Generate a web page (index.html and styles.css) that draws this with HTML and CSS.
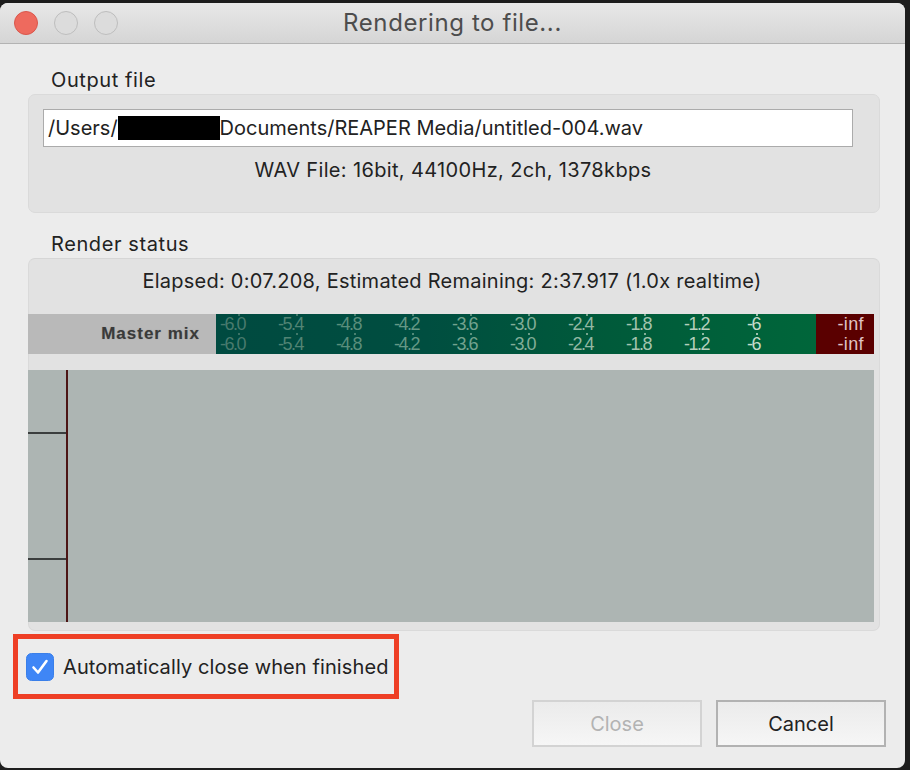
FILE: index.html
```html
<!DOCTYPE html>
<html>
<head>
<meta charset="utf-8">
<link rel="stylesheet" href="styles.css">
</head>
<body>
<div class="window">
  <div class="titlebar">
    <div class="lights">
      <span class="light red"></span>
      <span class="light"></span>
      <span class="light"></span>
    </div>
    <div class="title">Rendering to file...</div>
  </div>
  <div class="content">
    <div class="label">Output file</div>
    <div class="group group-output">
      <div class="input">/Users/<span class="redact"></span>Documents/REAPER Media/untitled-004.wav</div>
      <div class="info">WAV File: 16bit, 44100Hz, 2ch, 1378kbps</div>
    </div>
    <div class="label label-status">Render status</div>
    <div class="group group-status">
      <div class="info info-elapsed">Elapsed: 0:07.208, Estimated Remaining: 2:37.917 (1.0x realtime)</div>
      <div class="meter">
        <div class="meter-name">Master mix</div>
        <div class="meter-scale">
          <div class="tick c1"><span>-6.0</span><span>-6.0</span></div>
          <div class="tick c2"><span>-5.4</span><span>-5.4</span></div>
          <div class="tick c3"><span>-4.8</span><span>-4.8</span></div>
          <div class="tick c4"><span>-4.2</span><span>-4.2</span></div>
          <div class="tick c5"><span>-3.6</span><span>-3.6</span></div>
          <div class="tick c6"><span>-3.0</span><span>-3.0</span></div>
          <div class="tick c7"><span>-2.4</span><span>-2.4</span></div>
          <div class="tick c8"><span>-1.8</span><span>-1.8</span></div>
          <div class="tick c9"><span>-1.2</span><span>-1.2</span></div>
          <div class="tick c10 short"><span>-6</span><span>-6</span></div>
        </div>
        <div class="meter-peak"><span>-inf</span><span>-inf</span></div>
      </div>
      <div class="graph">
        <div class="graph-gutter">
          <div class="gutter-cell"></div>
          <div class="gutter-cell"></div>
        </div>
        <div class="graph-body"></div>
      </div>
    </div>
    <div class="checkrow">
      <label class="check">
        <svg class="checkbox" width="28" height="28" viewBox="0 0 28 28">
          <rect x="0.5" y="0.5" width="27" height="27" rx="5" fill="#3f86f6" stroke="#3a7fe9"/>
          <path d="M7.5 14.5 L12 19.5 L20.5 8" fill="none" stroke="#ffffff" stroke-width="2.6" stroke-linecap="round" stroke-linejoin="round"/>
        </svg>
        <span>Automatically close when finished</span>
      </label>
    </div>
    <div class="buttons">
      <button class="btn btn-disabled">Close</button>
      <button class="btn">Cancel</button>
    </div>
  </div>
</div>
</body>
</html>
```

FILE: styles.css
```css
html, body {
  margin: 0;
  padding: 0;
}
body {
  background: #1d1d1d;
  width: 910px;
  height: 770px;
  overflow: hidden;
  font-family: "Inter", "Roboto", "Liberation Sans", sans-serif;
}
.window {
  margin-top: 3px;
  width: 905px;
  height: 765px;
  background: #ececec;
  border-radius: 8px;
  overflow: hidden;
}
.titlebar {
  height: 40px;
  border-bottom: 1px solid #b3b3b3;
  background: linear-gradient(#e8e8e8, #d5d5d5);
  display: flex;
  align-items: center;
  position: relative;
}
.lights {
  display: flex;
  gap: 16px;
  padding-left: 14px;
}
.light {
  width: 22px;
  height: 22px;
  border-radius: 50%;
  border: 1px solid #bdbdbd;
  background: #dcdcdc;
}
.light.red {
  background: #ee6a5e;
  border-color: #d9574c;
}
.title {
  position: absolute;
  left: 0;
  right: 0;
  top: 0;
  height: 40px;
  line-height: 40px;
  text-align: center;
  font-size: 24px;
  letter-spacing: 0.6px;
  color: #4d4d4d;
  pointer-events: none;
}
.content {
  padding: 0 25px 0 28px;
}
.label {
  font-size: 20px;
  letter-spacing: 0.6px;
  color: #222;
  padding-left: 23px;
  height: 24px;
  line-height: 24px;
  margin-top: 24px;
  margin-bottom: 2px;
}
.label-status {
  margin-top: 19px;
}
.group {
  background: #e2e2e2;
  border: 1px solid #dadada;
  border-radius: 7px;
  box-sizing: border-box;
  width: 852px;
}
.group-output {
  height: 119px;
  padding: 14px 26px 0 14px;
}
.input {
  height: 38px;
  box-sizing: border-box;
  border: 1px solid #ababab;
  background: #fff;
  font-size: 20px;
  color: #222;
  line-height: 36px;
  padding-left: 4px;
  display: flex;
  align-items: center;
  white-space: nowrap;
}
.redact {
  display: inline-block;
  width: 102px;
  height: 24px;
  background: #000;
}
.info {
  text-align: center;
  font-size: 20px;
  letter-spacing: 0.35px;
  color: #222;
  margin-top: 11px;
  line-height: 24px;
  padding-left: 10px;
}
.group-status {
  height: 373px;
  padding-top: 10px;
  border-top-color: #d6d6d6;
}
.info-elapsed {
  margin-top: 0;
  padding-left: 0;
  padding-right: 4px;
  letter-spacing: 0.25px;
}
.meter {
  margin-top: 21px;
  margin-left: -1px;
  width: 846px;
  height: 40px;
  display: flex;
  font-family: "Liberation Sans", "Arial", sans-serif;
}
.meter-name {
  width: 188px;
  background: #b9b9b9;
  color: #3a3a3a;
  font-size: 17px;
  font-weight: bold;
  text-align: right;
  padding-right: 16px;
  box-sizing: border-box;
  line-height: 40px;
  letter-spacing: 1px;
  text-shadow: 0 0 1px #8a8a8a;
}
.meter-scale {
  width: 600px;
  background: linear-gradient(90deg, #004a40 0%, #004e40 35%, #005a3a 65%, #00663a 100%);
  display: flex;
  padding-left: 4px;
  box-sizing: border-box;
}
.tick {
  width: 58px;
  display: flex;
  flex-direction: column;
  position: relative;
  font-size: 18px;
  letter-spacing: -1.5px;
  line-height: 20px;
}
.tick::before {
  content: "";
  position: absolute;
  top: 0;
  left: 18px;
  width: 2px;
  height: 2px;
  background: currentColor;
  opacity: 0.8;
}
.tick::after {
  content: "";
  position: absolute;
  top: 19px;
  left: 18px;
  width: 2px;
  height: 2px;
  background: currentColor;
  opacity: 0.8;
}
.tick span {
  height: 20px;
}
.c1 { color: #497a6e; }
.c2 { color: #518474; }
.c3 { color: #5a8e7c; }
.c4 { color: #659886; }
.c5 { color: #73a28e; }
.c6 { color: #82ad98; }
.c7 { color: #92b8a3; }
.c8 { color: #a3c4af; }
.c9 { color: #b4cfbc; }
.c10 { color: #c6dbca; padding-left: 5px; }
.c10::before, .c10::after { left: 14px; }
.meter-peak {
  width: 58px;
  background: #5a0000;
  color: #e0c4c4;
  font-size: 18px;
  letter-spacing: 0.4px;
  line-height: 20px;
  display: flex;
  flex-direction: column;
  align-items: flex-end;
  padding-right: 10px;
  box-sizing: border-box;
}
.graph {
  margin-top: 16px;
  margin-left: -1px;
  width: 846px;
  height: 252px;
  background: #adb5b3;
  display: flex;
}
.graph-gutter {
  width: 38px;
  border-right: 2px solid #4c1515;
  display: flex;
  flex-direction: column;
}
.gutter-cell {
  height: 62px;
  border-bottom: 2px solid #3b3e3e;
  margin-bottom: 62px;
}
.graph-body {
  flex: 1;
}
.checkrow {
  margin-top: 3px;
  margin-left: -15px;
  width: 386px;
  height: 65px;
  box-sizing: border-box;
  border: 5px solid #ee3f25;
  display: flex;
  align-items: center;
  padding-left: 8px;
}
.check {
  display: flex;
  align-items: center;
  gap: 9px;
  font-size: 20px;
  letter-spacing: 0.1px;
  color: #222;
}
.checkbox {
  display: block;
}
.buttons {
  display: flex;
  justify-content: flex-end;
  gap: 14px;
  margin-top: 1px;
  margin-right: -6px;
}
.btn {
  width: 170px;
  height: 47px;
  box-sizing: border-box;
  border: 2px solid #b2b2b2;
  background: linear-gradient(#ebebeb, #f6f6f6);
  font-family: "Inter", "Roboto", "Liberation Sans", sans-serif;
  font-size: 20px;
  color: #222;
  padding: 0;
  border-radius: 0;
}
.btn-disabled {
  border-color: #d3d3d3;
  color: #b3b3b3;
}
```
